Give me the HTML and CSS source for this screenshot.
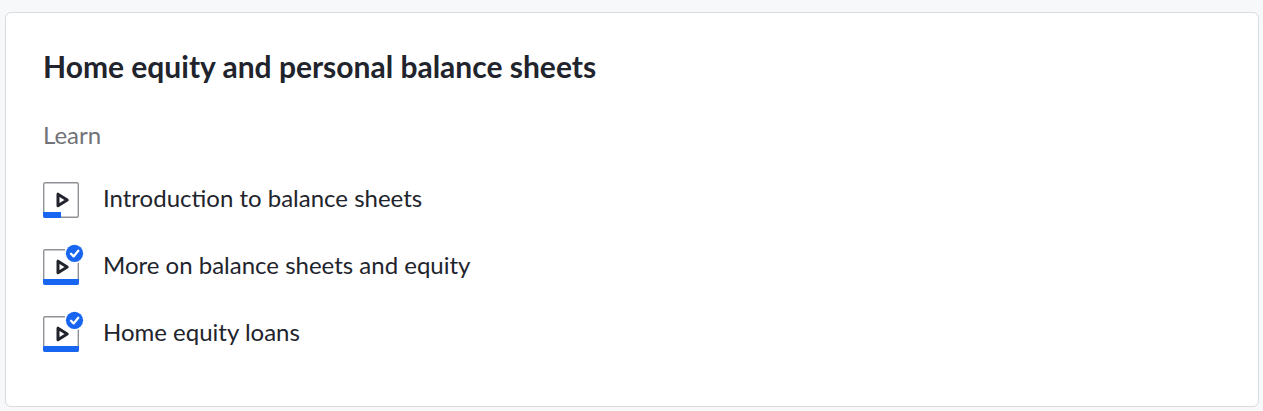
FILE: index.html
```html
<!DOCTYPE html>
<html lang="en">
<head>
<meta charset="utf-8">
<title>Home equity and personal balance sheets</title>
<link rel="stylesheet" href="styles.css">
</head>
<body>
<main class="card">
  <h1 class="title">Home equity and personal balance sheets</h1>
  <h2 class="label">Learn</h2>
  <ul class="lessons">
    <li><a class="lesson" href="#intro">
      <svg class="icon" viewBox="0 0 42 42" aria-hidden="true">
        <rect x="0.7" y="5.7" width="34.6" height="34.6" rx="1.5" fill="#fff" stroke="#909196" stroke-width="1.4"/>
        <path d="M0 35h18v6H2a2 2 0 0 1-2-2z" fill="#1865f2"/>
        <path d="M15 17.200v11.600l9.200-5.800z" fill="none" stroke="#21242c" stroke-width="3" stroke-linejoin="round"/>
      </svg>
      <span>Introduction to balance sheets</span>
    </a></li>
    <li><a class="lesson" href="#more">
      <svg class="icon" viewBox="0 0 42 42" aria-hidden="true">
        <rect x="0.7" y="5.7" width="34.6" height="34.6" rx="1.5" fill="#fff" stroke="#909196" stroke-width="1.4"/>
        <path d="M0 35h36v4a2 2 0 0 1-2 2H2a2 2 0 0 1-2-2z" fill="#1865f2"/>
        <path d="M15 17.200v11.600l9.200-5.800z" fill="none" stroke="#21242c" stroke-width="3" stroke-linejoin="round"/>
        <circle cx="31.500" cy="9.300" r="10.200" fill="#fff"/>
        <circle cx="31.500" cy="9.300" r="8.600" fill="#1865f2"/>
        <path d="M28 9.800l2.600 2.600 4.700-5.600" fill="none" stroke="#fff" stroke-width="2.300" stroke-linecap="round" stroke-linejoin="round"/>
      </svg>
      <span>More on balance sheets and equity</span>
    </a></li>
    <li><a class="lesson" href="#loans">
      <svg class="icon" viewBox="0 0 42 42" aria-hidden="true">
        <rect x="0.7" y="5.7" width="34.6" height="34.6" rx="1.5" fill="#fff" stroke="#909196" stroke-width="1.4"/>
        <path d="M0 35h36v4a2 2 0 0 1-2 2H2a2 2 0 0 1-2-2z" fill="#1865f2"/>
        <path d="M15 17.200v11.600l9.200-5.800z" fill="none" stroke="#21242c" stroke-width="3" stroke-linejoin="round"/>
        <circle cx="31.500" cy="9.300" r="10.200" fill="#fff"/>
        <circle cx="31.500" cy="9.300" r="8.600" fill="#1865f2"/>
        <path d="M28 9.800l2.600 2.600 4.700-5.600" fill="none" stroke="#fff" stroke-width="2.300" stroke-linecap="round" stroke-linejoin="round"/>
      </svg>
      <span>Home equity loans</span>
    </a></li>
  </ul>
</main>
</body>
</html>
```

FILE: styles.css
```css
* { box-sizing: border-box; }
body {
  margin: 0;
  padding: 12px 4px 4px 5px;
  background: #f7f8fa;
  color: #21242c;
  font-family: Lato, "Noto Sans", sans-serif;
}
.card {
  padding: 34px 37px 53px;
  background: #fff;
  border: 1px solid #dadbdd;
  border-radius: 6px;
}
.title {
  margin: 0;
  font-size: 30px;
  line-height: 38px;
  font-weight: 700;
}
.label {
  margin: 35px 0 0;
  font-size: 24px;
  line-height: 30px;
  font-weight: 400;
  color: #717378;
}
.lessons {
  display: grid;
  gap: 25px;
  margin: 27px 0 0;
  padding: 0;
  list-style: none;
}
.lesson {
  display: flex;
  align-items: center;
  gap: 18px;
  color: inherit;
  font-size: 24px;
  line-height: 30px;
  text-decoration: none;
}
.icon {
  flex: none;
  width: 42px;
  height: 42px;
}
```
